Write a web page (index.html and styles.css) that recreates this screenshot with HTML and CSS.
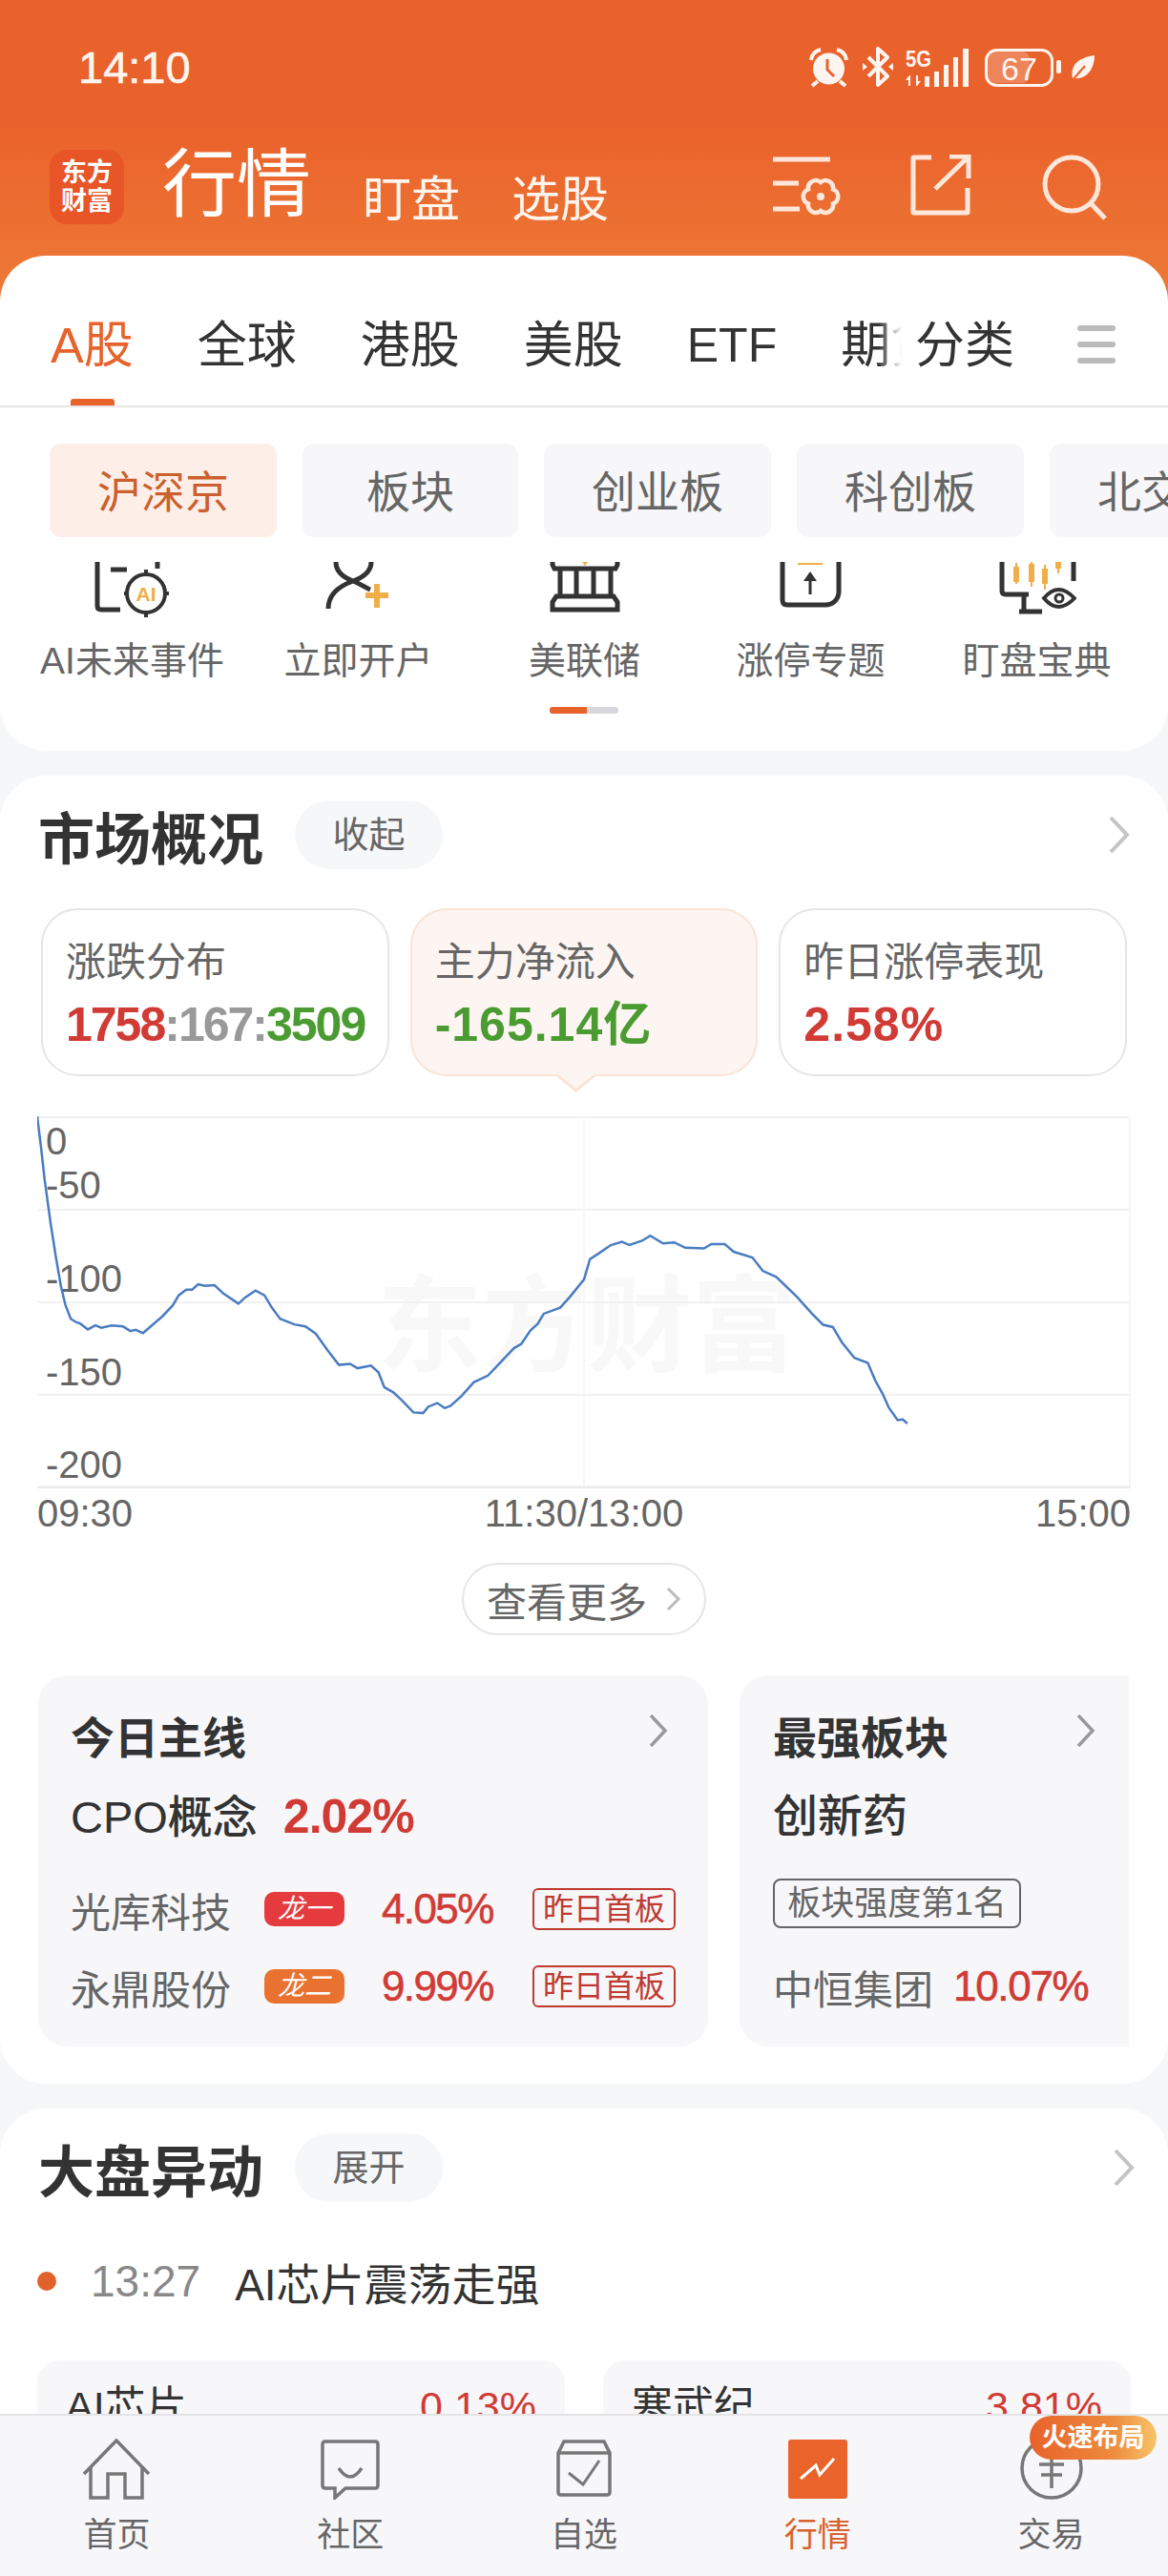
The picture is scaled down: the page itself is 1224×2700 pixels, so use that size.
FILE: index.html
```html
<!DOCTYPE html>
<html lang="zh-CN">
<head>
    <meta charset="UTF-8">
    <title>行情</title>
    <link rel="stylesheet" href="styles.css">
</head>
<body>
<section class="page">
    <section class="hero">
        <div class="status">
            <span class="time">14:10</span>
            <svg width="300" height="44" viewBox="849 48 300 44">
                <!-- alarm -->
                <circle cx="869.5" cy="72" r="16.5" fill="#fff5f0"/>
                <path d="M868 62v11l7 7" fill="none" stroke="#ea622b" stroke-width="3"/>
                <path d="M851 63q1-9 10-11M888 63q-1-9-10-11M858 85l-6 5M881 85l6 5" fill="none" stroke="#fff5f0" stroke-width="4"/>
                <!-- bluetooth -->
                <path d="M911 60l20 20-10 9V51l10 9-20 20" fill="none" stroke="#fff5f0" stroke-width="4" stroke-linejoin="round"/>
                <path d="M905 66l5 4-5 4zM937 66l-5 4 5 4z" fill="#fff5f0"/>
                <!-- signal -->
                <text class="s5g" x="950" y="70" textLength="27" lengthAdjust="spacingAndGlyphs">5G</text>
                <path d="M954 79l-4 5h3v6h2V79zM962 90l4-5h-3v-6h-2v11z" fill="#fff5f0"/>
                <path d="M970 80h5v11h-5zM980 75h5v16h-5zM990 68h5v23h-5zM1000 60h5v31h-5zM1010 51h6v40h-6z" fill="#fff5f0"/>
                <!-- battery -->
                <rect x="1036" y="54" width="44" height="33" rx="8" fill="#fff" opacity=".22"/>
                <rect x="1034.5" y="52.5" width="69" height="37" rx="11" fill="none" stroke="#fff5f0" stroke-width="3"/>
                <text class="batt" x="1069" y="84" text-anchor="middle">67</text>
                <rect x="1108" y="63" width="5" height="14" rx="2" fill="#fff5f0"/>
                <!-- leaf -->
                <path d="M1125 82c-3-14 7-22 23-24 0 14-8 26-23 24z" fill="#fff5f0"/>
                <path d="M1124 85l14-16" stroke="#ea622b" stroke-width="2"/>
            </svg>
        </div>
        <div class="appbar">
            <div class="logo"><span>东方</span><span>财富</span></div>
            <span class="title">行情</span>
            <span class="sublink">盯盘</span>
            <span class="sublink">选股</span>
            <div class="appbar-icons">
                <svg width="72" height="64" viewBox="808 165 72 64" fill="none" stroke="#fee7da" stroke-width="5">
                    <path d="M808 170h60M808 195h27M808 222h28"/>
                    <path stroke-width="4.5" d="M858 194A8 8 0 0 1 871 201.5A8 8 0 0 1 871 216.5A8 8 0 0 1 858 224A8 8 0 0 1 845 216.5A8 8 0 0 1 845 201.5A8 8 0 0 1 858 194z"/>
                    <circle cx="858" cy="209" r="4" fill="#fee7da" stroke="none"/>
                </svg>
                <svg width="64" height="64" viewBox="951 165 64 64" fill="none" stroke="#fee7da" stroke-width="5">
                    <path d="M973 168h-18a1 1 0 0 0-1 1v56a1 1 0 0 0 1 1h55a1 1 0 0 0 1-1v-25"/>
                    <path d="M977 201l34-33M992 167h20v23"/>
                </svg>
                <svg width="72" height="70" viewBox="1090 161 72 70" fill="none" stroke="#fee7da" stroke-width="5">
                    <circle cx="1123" cy="192" r="28"/>
                    <path d="M1143 212l15 16"/>
                </svg>
            </div>
        </div>

        <div class="sheet">
            <div class="tabs">
                <div class="tabs-track">
                    <span class="tab tab-on">A股</span>
                    <span class="tab">全球</span>
                    <span class="tab">港股</span>
                    <span class="tab">美股</span>
                    <span class="tab tab-latin">ETF</span>
                    <span class="tab">期货</span>
                </div>
                <span class="tab tab-fixed">分类</span>
                <svg class="tabs-menu" width="40" height="44" viewBox="0 0 40 44">
                    <path d="M3 5h34M3 22h34M3 39h34" stroke="#bbb" stroke-width="6" stroke-linecap="round"/>
                </svg>
            </div>

            <div class="chips">
                <span class="chip chip-on">沪深京</span>
                <span class="chip chip-short">板块</span>
                <span class="chip">创业板</span>
                <span class="chip">科创板</span>
                <span class="chip">北交所</span>
            </div>

            <div class="shortcuts">
                <div class="shortcut">
                    <svg width="80" height="58" viewBox="100 589 80 58" fill="none" stroke="#333" stroke-width="5">
                        <path d="M103 589v46q0 4 4 4h20M117 597h17M166 589v7"/>
                        <circle cx="154" cy="622" r="20" stroke-width="4"/>
                        <path d="M154 597v6M154 641v6M131 622h5M172 622h6" stroke-width="4"/>
                        <text class="ai" x="154" y="630" text-anchor="middle">AI</text>
                    </svg>
                    <span>AI未来事件</span>
                </div>
                <div class="shortcut">
                    <svg width="70" height="58" viewBox="342 589 70 58" fill="none" stroke="#333" stroke-width="5">
                        <path d="M353 589c0 10 7 16 18 20 8 3 13 7 18 9M390 589c0 10-8 16-19 20-14 5-26 14-26 29"/>
                        <path d="M396 612v25M384 624h24" stroke="#f0ae48" stroke-width="6"/>
                    </svg>
                    <span>立即开户</span>
                </div>
                <div class="shortcut">
                    <svg width="74" height="58" viewBox="575 589 74 58" fill="none" stroke="#333" stroke-width="5">
                        <path d="M609 589h6l-3 4z" fill="#f0ae48" stroke="none"/>
                        <path d="M578 589v3l2 4h64l2-4v-3M586 596v29M603 596v29M621 596v29M639 596v29"/>
                        <path d="M582 625h60l4 6v8h-68v-8z"/>
                    </svg>
                    <span>美联储</span>
                </div>
                <div class="shortcut">
                    <svg width="66" height="58" viewBox="817 589 66 58" fill="none" stroke="#333" stroke-width="5">
                        <path d="M820 589v40q0 5 5 5h40c8 0 14-6 14-14v-31"/>
                        <path d="M836 591h26" stroke="#f0ae48" stroke-width="2"/>
                        <path d="M849 601v22" stroke-width="3"/>
                        <path d="M842 609l7-10 7 10z" fill="#333" stroke="none"/>
                    </svg>
                    <span>涨停专题</span>
                </div>
                <div class="shortcut">
                    <svg width="82" height="58" viewBox="1044 589 82 58" fill="none" stroke="#333" stroke-width="5">
                        <path d="M1048 589v30q0 4 4 4h24M1123 589v20M1071 623v18h-5M1066 641h24"/>
                        <path d="M1063 590v22M1079 589v26M1093 592v26M1107 589v12" stroke="#f0ae48" stroke-width="2"/>
                        <path d="M1060 594h6v16h-6zM1076 591h6v19h-6zM1090 596h6v16h-6zM1104 589h6v7h-6z" fill="#f0ae48" stroke="none"/>
                        <path d="M1092 627q15-18 32 0q-17 18-32 0z" fill="#fff" stroke-width="4"/>
                        <circle cx="1108" cy="627" r="4" stroke-width="3"/>
                    </svg>
                    <span>盯盘宝典</span>
                </div>
            </div>
            <div class="pager"><div class="pager-fill"></div></div>
        </div>
    </section>

    <section class="card">
        <div class="card-head">
            <h2>市场概况</h2>
            <span class="pill">收起</span>
            <svg class="chevron" width="24" height="40" viewBox="0 0 24 40"><path d="M3 2l17 18L3 38" fill="none" stroke="#c4c4c4" stroke-width="4"/></svg>
        </div>

        <div class="stats">
            <div class="stat">
                <div class="stat-label">涨跌分布</div>
                <div class="stat-value stat-split"><span class="up">1758</span><span class="flat">:167:</span><span class="down">3509</span></div>
            </div>
            <div class="stat stat-on">
                <div class="stat-label">主力净流入</div>
                <div class="stat-value down">-165.14亿</div>
            </div>
            <div class="stat">
                <div class="stat-label">昨日涨停表现</div>
                <div class="stat-value up">2.58%</div>
            </div>
        </div>

        <div class="chart">
            <svg width="1146" height="390" viewBox="0 0 1146 390">
                <text class="watermark" x="576" y="259" text-anchor="middle">东方财富</text>
                <path d="M0 1H1146M0 98H1146M0 195H1146M0 292H1146" stroke="#f1f1f1" stroke-width="2" fill="none"/>
                <path d="M573 0V390M1145 0V390" stroke="#f6f6f6" stroke-width="2" fill="none"/>
                <path d="M0 389H1146" stroke="#ebebeb" stroke-width="3"/>
                <text class="axis" x="9" y="40">0</text>
                <text class="axis" x="9" y="86">-50</text>
                <text class="axis" x="9" y="184">-100</text>
                <text class="axis" x="9" y="282">-150</text>
                <text class="axis" x="9" y="379">-200</text>
                <svg x="0" y="0" width="1146" height="390" viewBox="50 60 1468 1112" preserveAspectRatio="none">
                    <polyline class="curve" points="50,60 55,150 60,250 68,380 75,480 82,570 88,625 95,665 102,675 108,680 118,697 128,685 136,692 150,685 165,688 175,702 182,698 192,708 205,683 218,658 232,625 240,595 250,578 258,578 266,562 275,567 288,565 300,590 320,620 330,600 343,581 355,595 365,632 376,665 395,682 410,688 424,710 440,760 455,803 470,800 480,813 498,805 508,825 516,870 528,885 540,910 555,945 568,947 575,928 587,917 597,932 605,925 620,895 636,855 655,835 672,795 690,753 700,740 712,700 722,680 730,650 752,632 765,600 784,548 792,487 805,468 820,445 835,435 845,445 862,432 873,417 890,440 905,437 920,453 945,455 955,442 973,442 985,465 1010,482 1024,522 1042,540 1070,600 1090,650 1105,683 1118,690 1130,735 1147,782 1165,797 1175,850 1185,890 1193,930 1205,968 1212,966 1218,978"/>
                </svg>
            </svg>
        </div>
        <div class="chart-times">
            <span>09:30</span>
            <span>11:30/13:00</span>
            <span>15:00</span>
        </div>

        <div class="more">
            <span>查看更多</span>
            <svg width="16" height="26" viewBox="0 0 16 26"><path d="M2 2l11 11L2 24" fill="none" stroke="#bbb" stroke-width="3"/></svg>
        </div>

        <div class="themes">
            <div class="theme theme-main">
                <div class="theme-title">
                    <span>今日主线</span>
                    <svg width="20" height="34" viewBox="0 0 20 34"><path d="M2 1l15 16L2 33" fill="none" stroke="#999" stroke-width="3.5"/></svg>
                </div>
                <div class="theme-name">CPO概念<span class="theme-pct up">2.02%</span></div>
                <div class="stock stock-first">
                    <span class="stock-name">光库科技</span>
                    <span class="dragon">龙一</span>
                    <span class="stock-pct up">4.05%</span>
                    <span class="stock-tag">昨日首板</span>
                </div>
                <div class="stock stock-next">
                    <span class="stock-name">永鼎股份</span>
                    <span class="dragon dragon-two">龙二</span>
                    <span class="stock-pct up">9.99%</span>
                    <span class="stock-tag">昨日首板</span>
                </div>
            </div>
            <div class="theme theme-side">
                <div class="theme-title">
                    <span>最强板块</span>
                    <svg width="20" height="34" viewBox="0 0 20 34"><path d="M2 1l15 16L2 33" fill="none" stroke="#999" stroke-width="3.5"/></svg>
                </div>
                <div class="theme-name">创新药</div>
                <span class="rank">板块强度第1名</span>
                <div class="stock side-stock">
                    <span class="stock-name">中恒集团</span>
                    <span class="side-pct up">10.07%</span>
                </div>
            </div>
        </div>
    </section>

    <section class="card">
        <div class="card-head card-head-alt">
            <h2>大盘异动</h2>
            <span class="pill">展开</span>
            <svg class="chevron" width="24" height="40" viewBox="0 0 24 40"><path d="M3 2l17 18L3 38" fill="none" stroke="#c4c4c4" stroke-width="4"/></svg>
        </div>
        <div class="news">
            <span class="news-dot"></span>
            <span class="news-time">13:27</span>
            <span class="news-text">AI芯片震荡走强</span>
        </div>
        <div class="minis">
            <div class="mini"><span>AI芯片</span><span class="up">0.13%</span></div>
            <div class="mini"><span>寒武纪</span><span class="up">3.81%</span></div>
        </div>
    </section>

    <nav class="tabbar">
        <div class="tabbar-item">
            <svg width="72" height="64" viewBox="85 2556 72 64" fill="none" stroke="#777" stroke-width="3.5">
                <path d="M87 2593l34-35 34 35"/>
                <path d="M94 2585v33h18v-25h18v25h18v-33"/>
            </svg>
            <span>首页</span>
        </div>
        <div class="tabbar-item">
            <svg width="64" height="64" viewBox="335 2556 64 64" fill="none" stroke="#777" stroke-width="3.5">
                <path d="M338 2562q0-3 3-3h52q3 0 3 3v43q0 3-3 3h-31l-11 10v-10h-10q-3 0-3-3z"/>
                <path d="M355 2587q12 18 24 0"/>
            </svg>
            <span>社区</span>
        </div>
        <div class="tabbar-item">
            <svg width="60" height="64" viewBox="581 2556 60 64" fill="none" stroke="#777" stroke-width="3.5">
                <path d="M584 2571l6-12h42l6 12v41q0 3-3 3h-48q-3 0-3-3zM584 2571h54"/>
                <path d="M595 2592l15 12 17-25" stroke-width="3"/>
            </svg>
            <span>自选</span>
        </div>
        <div class="tabbar-item tabbar-on">
            <svg width="64" height="64" viewBox="825 2555 64 64">
                <rect x="826" y="2556" width="62" height="62" rx="3" fill="#ea632b"/>
                <path d="M839 2597l16-14 4 10 15-17" fill="none" stroke="#fff" stroke-width="3"/>
            </svg>
            <span>行情</span>
        </div>
        <div class="tabbar-item">
            <svg width="70" height="64" viewBox="1066 2555 70 64" fill="none" stroke="#777" stroke-width="3.5">
                <circle cx="1101" cy="2586" r="31"/>
                <path d="M1088 2582h26M1090 2593h22M1101 2574v33"/>
            </svg>
            <span>交易</span>
        </div>
        <span class="speed-badge">火速布局</span>
    </nav>
</section>
</body>
</html>
```

FILE: styles.css
```css
* {
    box-sizing: border-box;
}

body {
    margin: 0;
    font-family: "Liberation Sans", "Noto Sans CJK SC", sans-serif;
    color: #333;
}

.page {
    position: relative;
    width: 1224px;
    height: 2700px;
    overflow: hidden;
    background-color: #f6f7f9;
}

.up {
    color: #d13b36;
}

.down {
    color: #4a9c32;
}

.flat {
    color: #999;
}

/* header */
.hero {
    background: linear-gradient(#ea622b 0, #ea622b 130px, #ed7836 300px) no-repeat;
    background-size: 100% 320px;
}

.status {
    display: flex;
    justify-content: space-between;
    align-items: center;
    height: 140px;
    padding: 0 76px 0 82px;
}

.time {
    font-size: 47px;
    color: #fff5f0;
    -webkit-text-stroke: 0.6px #fff5f0;
}

.s5g {
    font-size: 23px;
    font-weight: bold;
    fill: #fff5f0;
}

.batt {
    font-size: 34px;
    fill: #fff5f0;
}

.appbar {
    display: flex;
    height: 128px;
    padding-left: 52px;
}

.logo {
    display: flex;
    flex-direction: column;
    align-items: center;
    justify-content: center;
    width: 78px;
    height: 78px;
    margin-top: 17px;
    border-radius: 18px;
    background-color: #e85527;
    color: #fff;
    font-size: 27px;
    font-weight: bold;
    line-height: 30px;
}

.title {
    margin: 14px 0 0 40px;
    font-size: 78px;
    line-height: 80px;
    color: #fff;
}

.sublink {
    margin: 40px 0 0 54px;
    font-size: 51px;
    line-height: 60px;
    color: #fff5ee;
}

.appbar-icons {
    display: flex;
    align-items: flex-start;
    gap: 72px;
    margin: 22px 62px 0 auto;
}

/* white sheet */
.sheet {
    padding-bottom: 39px;
    border-radius: 48px;
    background-color: #fff;
}

.tabs {
    display: flex;
    height: 159px;
    padding: 64px 0 0 53px;
    border-bottom: 2px solid #e6e6e6;
}

.tabs-track {
    display: flex;
    gap: 67px;
    width: 892px;
    height: 93px;
    overflow: hidden;
    -webkit-mask-image: linear-gradient(to right, #000 868px, transparent 892px);
}

.tab {
    position: relative;
    flex: none;
    font-size: 52px;
    line-height: 60px;
}

.tab-latin {
    font-size: 50px;
}

.tab-on {
    color: #e8632c;
}

.tab-on::after {
    content: "";
    position: absolute;
    left: 21px;
    top: 86px;
    width: 46px;
    height: 7px;
    border-radius: 3px 3px 0 0;
    background-color: #e8632c;
}

.tab-fixed {
    margin-left: 14px;
}

.tabs-menu {
    margin: 7px 0 0 66px;
}

.chips {
    display: flex;
    gap: 27px;
    margin-top: 38px;
    padding-left: 52px;
    overflow: hidden;
}

.chip {
    flex: none;
    width: 238px;
    height: 98px;
    border-radius: 12px;
    background-color: #f7f7f9;
    color: #666;
    font-size: 46px;
    line-height: 103px;
    text-align: center;
}

.chip-short {
    width: 226px;
}

.chip-on {
    background-color: #fdeee7;
    color: #cb5f2d;
}

.shortcuts {
    display: grid;
    grid-template-columns: repeat(5, 237px);
    margin-top: 26px;
    padding-left: 20px;
}

.shortcut {
    display: flex;
    flex-direction: column;
    align-items: center;
    color: #666;
    font-size: 39px;
    line-height: 44px;
}

.shortcut svg {
    display: block;
    margin-bottom: 24px;
}

.ai {
    font-size: 21px;
    font-weight: bold;
    fill: #f0ae48;
    stroke: none;
}

.pager {
    width: 72px;
    height: 7px;
    margin: 26px auto 0;
    border-radius: 3px;
    background-color: #d8d8dc;
    overflow: hidden;
}

.pager-fill {
    width: 39px;
    height: 7px;
    background-color: #e8632c;
}

/* sections */
.card {
    margin-top: 26px;
    padding: 26px 0 39px;
    border-radius: 48px;
    background-color: #fff;
}

.card-head {
    display: flex;
    align-items: center;
    height: 72px;
    padding: 0 39px 0 40px;
}

.card-head-alt {
    padding-right: 34px;
}

.card-head h2 {
    margin: 0;
    font-size: 59px;
    font-weight: bold;
}

.pill {
    width: 155px;
    margin-left: 33px;
    border-radius: 36px;
    background-color: #f6f7f9;
    color: #666;
    font-size: 38px;
    line-height: 72px;
    text-align: center;
}

.chevron {
    margin-left: auto;
}

.stats {
    display: grid;
    grid-template-columns: repeat(3, 1fr);
    gap: 22px;
    margin-top: 41px;
    padding: 0 43px;
}

.stat {
    position: relative;
    height: 176px;
    padding: 30px 0 0 24px;
    border: 2px solid #e6e6e6;
    border-radius: 38px;
}

.stat-on {
    border-color: #fbe3d6;
    background-color: #fdf5f1;
}

.stat-on::before,
.stat-on::after {
    content: "";
    position: absolute;
    clip-path: polygon(0 0, 100% 0, 50% 100%);
}

.stat-on::before {
    left: 150px;
    top: 173px;
    width: 44px;
    height: 18px;
    background-color: #fbe3d6;
}

.stat-on::after {
    left: 153px;
    top: 172px;
    width: 38px;
    height: 15px;
    background-color: #fdf5f1;
}

.stat-label {
    color: #666;
    font-size: 42px;
    line-height: 50px;
}

.stat-value {
    margin-top: 12px;
    font-size: 50px;
    font-weight: bold;
    line-height: 56px;
    letter-spacing: 1px;
}

.stat-split {
    letter-spacing: -2px;
}

/* chart */
.chart {
    height: 390px;
    margin: 42px 0 0 39px;
}

.chart svg {
    display: block;
}

.watermark {
    font-size: 110px;
    font-weight: bold;
    fill: #f8f8f8;
}

.axis {
    font-size: 40px;
    fill: #666;
}

.curve {
    fill: none;
    stroke: #4a7cc2;
    stroke-width: 2.5;
    vector-effect: non-scaling-stroke;
}

.chart-times {
    display: flex;
    justify-content: space-between;
    width: 1146px;
    margin: 4px 0 0 39px;
    color: #666;
    font-size: 40px;
    line-height: 44px;
}

.more {
    display: flex;
    align-items: center;
    justify-content: center;
    gap: 20px;
    width: 256px;
    height: 76px;
    margin: 30px auto 0;
    border: 2px solid #e6e6e6;
    border-radius: 38px;
    color: #666;
    font-size: 42px;
}

/* theme cards */
.themes {
    display: flex;
    gap: 33px;
    margin: 42px 41px 0 40px;
    overflow: hidden;
}

.theme {
    flex: none;
    height: 389px;
    padding: 37px 0 0 34px;
    border-radius: 30px;
    background-color: #f7f7fa;
}

.theme-main {
    width: 702px;
}

.theme-side {
    width: 500px;
    padding-left: 35px;
}

.theme-title {
    display: flex;
    justify-content: space-between;
    align-items: flex-start;
    height: 58px;
    font-size: 46px;
    font-weight: bold;
    line-height: 58px;
}

.theme-title svg {
    margin-top: 4px;
}

.theme-main .theme-title {
    width: 626px;
}

.theme-side .theme-title {
    width: 338px;
}

.theme-name {
    margin-top: 24px;
    font-size: 47px;
    font-weight: 500;
    line-height: 58px;
}

.theme-pct {
    margin-left: 27px;
    font-size: 50px;
    font-weight: bold;
    letter-spacing: -1px;
}

.stock {
    display: flex;
    align-items: center;
    height: 44px;
}

.stock-first {
    margin-top: 45px;
}

.stock-next {
    margin-top: 37px;
}

.stock-name {
    flex: none;
    width: 164px;
    color: #666;
    font-size: 42px;
    white-space: nowrap;
}

.dragon {
    width: 84px;
    margin-left: 39px;
    border-radius: 10px;
    background-color: #e63b3e;
    color: #fff;
    font-size: 28px;
    font-style: italic;
    line-height: 36px;
    text-align: center;
}

.dragon-two {
    background-color: #ea7230;
}

.stock-pct {
    width: 117px;
    margin-left: 39px;
    font-size: 44px;
    letter-spacing: -1.6px;
    white-space: nowrap;
    -webkit-text-stroke: 0.6px #d13b36;
}

.stock-tag {
    width: 150px;
    margin-left: 41px;
    border: 2px solid #c0392f;
    border-radius: 6px;
    color: #c0392f;
    font-size: 32px;
    line-height: 40px;
    text-align: center;
}

.rank {
    display: block;
    width: 260px;
    margin-top: 36px;
    border: 2px solid #666;
    border-radius: 8px;
    color: #666;
    font-size: 35px;
    line-height: 48px;
    text-align: center;
}

.side-stock {
    margin-top: 39px;
}

.side-pct {
    margin-left: 25px;
    font-size: 44px;
    letter-spacing: -1.3px;
    -webkit-text-stroke: 0.6px #d13b36;
}

/* news */
.news {
    display: flex;
    align-items: center;
    height: 60px;
    margin-top: 53px;
    padding-left: 39px;
}

.news-dot {
    width: 20px;
    height: 20px;
    border-radius: 50%;
    background-color: #e0622a;
}

.news-time {
    margin-left: 36px;
    color: #888;
    font-size: 46px;
}

.news-text {
    margin-left: 36px;
    font-size: 46px;
}

.minis {
    display: grid;
    grid-template-columns: repeat(2, 1fr);
    gap: 40px;
    margin-top: 53px;
    padding: 0 39px;
}

.mini {
    display: flex;
    justify-content: space-between;
    height: 140px;
    padding: 23px 30px 0;
    border-radius: 24px;
    background-color: #f7f7fa;
    font-size: 43px;
    line-height: 50px;
}

/* bottom bar */
.tabbar {
    position: absolute;
    left: 0;
    bottom: 0;
    display: grid;
    grid-template-columns: repeat(5, 1fr);
    width: 100%;
    height: 170px;
    padding-top: 24px;
    border-top: 2px solid #e4e4e8;
    background-color: #f7f7fa;
}

.tabbar-item {
    display: flex;
    flex-direction: column;
    align-items: center;
    color: #666;
    font-size: 35px;
    line-height: 40px;
}

.tabbar-item svg {
    display: block;
    margin-bottom: 17px;
}

.tabbar-on {
    color: #d9622c;
}

.speed-badge {
    position: absolute;
    left: 1079px;
    top: 0;
    width: 133px;
    height: 46px;
    border-radius: 23px;
    background: linear-gradient(to right, #e8622a, #ee8a3e 65%, #f8c469);
    color: #fff;
    font-size: 27px;
    font-weight: bold;
    line-height: 46px;
    text-align: center;
}
```
